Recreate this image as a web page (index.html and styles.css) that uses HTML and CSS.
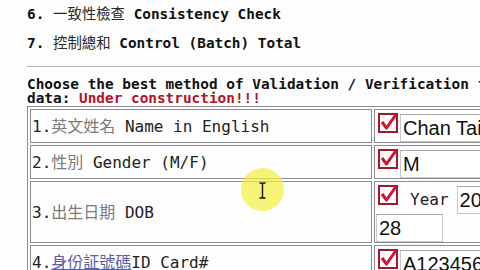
FILE: index.html
```html
<!DOCTYPE html>
<html lang="zh-Hant">
<head>
    <meta charset="UTF-8">
    <title>Validation / Verification</title>
    <link rel="stylesheet" href="styles.css">
</head>
<body>
    <div class="page">
        <p class="step">6. <span class="zh">一致性檢查</span> Consistency Check</p>
        <p class="step">7. <span class="zh">控制總和</span> Control (Batch) Total</p>

        <hr class="rule">

        <p class="intro">Choose the best method of Validation / Verification for the following<br>data: <span class="warn">Under construction!!!</span></p>

        <table class="form">
            <colgroup>
                <col class="col-label">
                <col class="col-field">
            </colgroup>

            <!-- Row 1 -->
            <tr>
                <td class="label">1.<span class="zh">英文姓名</span> Name in English</td>
                <td class="field">
                    <div class="line">
                        <svg class="tick" viewBox="0 0 20 20"><rect x="1" y="1" width="18" height="18"/><path d="M4 9 L8.5 15 L18 1.5"/></svg>
                        <input class="box wide" type="text" value="Chan Tai Man" readonly>
                    </div>
                </td>
            </tr>

            <!-- Row 2 -->
            <tr>
                <td class="label">2.<span class="zh">性別</span> Gender (M/F)</td>
                <td class="field">
                    <div class="line">
                        <svg class="tick" viewBox="0 0 20 20"><rect x="1" y="1" width="18" height="18"/><path d="M4 9 L8.5 15 L18 1.5"/></svg>
                        <input class="box wide" type="text" value="M" readonly>
                    </div>
                </td>
            </tr>

            <!-- Row 3 -->
            <tr>
                <td class="label">3.<span class="zh">出生日期</span> DOB</td>
                <td class="field">
                    <div class="line">
                        <svg class="tick" viewBox="0 0 20 20"><rect x="1" y="1" width="18" height="18"/><path d="M4 9 L8.5 15 L18 1.5"/></svg>
                        <span class="unit">Year</span>
                        <input class="box year" type="text" value="2012" readonly>
                    </div>
                    <div class="line next">
                        <input class="box day" type="text" value="28" readonly>
                    </div>
                </td>
            </tr>

            <!-- Row 4 -->
            <tr>
                <td class="label">4.<a class="zh link" href="#">身份証號碼</a>ID Card#</td>
                <td class="field">
                    <div class="line">
                        <svg class="tick" viewBox="0 0 20 20"><rect x="1" y="1" width="18" height="18"/><path d="M4 9 L8.5 15 L18 1.5"/></svg>
                        <input class="box wide" type="text" value="A1234567" readonly>
                    </div>
                </td>
            </tr>
        </table>
    </div>

    <!-- mouse pointer with its highlight -->
    <div class="hilite"></div>
    <svg class="ibeam" viewBox="0 0 9 17"><path d="M1.5 1 H3.5 Q4.5 1 4.5 2.5 V14.5 Q4.5 16 3.5 16 H1.5 M7.5 1 H5.5 Q4.5 1 4.5 2.5 M4.5 14.5 Q4.5 16 5.5 16 H7.5"/></svg>
</body>
</html>
```

FILE: styles.css
```css
html,
body {
    overflow: hidden;
}

body {
    margin: 0;
    background: #fdfdfd;
    color: #111;
    font-family: "DejaVu Sans Mono", "Noto Sans CJK TC", monospace;
}

.page {
    padding-left: 27px;
    white-space: nowrap;
}

.zh {
    font-family: "Noto Sans CJK TC", sans-serif;
    line-height: 14px;
}

.step {
    margin: 0;
    font-size: 14.4px;
    font-weight: bold;
    line-height: 29px;
}

.step .zh {
    font-weight: normal;
    color: #2a2a2a;
}

.rule {
    margin: 8px 0 10px;
    border: 0;
    border-top: 1px solid #b4b4b4;
    width: 600px;
}

.intro {
    margin: 0;
    font-size: 14.4px;
    font-weight: bold;
    line-height: 14px;
}

.warn {
    color: #b3142a;
}

.form {
    table-layout: fixed;
    width: 660px;
    margin-top: 1px;
    border: 1px solid #8c8c8c;
    border-spacing: 2px;
}

.col-label {
    width: 342px;
}

.col-field {
    width: 310px;
}

.form td {
    border: 1px solid #8c8c8c;
    padding: 0 1px;
    overflow: hidden;
}

.label {
    font-size: 16px;
    color: #222;
    vertical-align: middle;
}

.label .zh {
    color: #7a7a7a;
}

.label .link {
    color: #5a5ea8;
    text-decoration: underline;
}

.field {
    vertical-align: top;
}

.line {
    display: flex;
    align-items: flex-start;
    height: 32px;
}

.line.next {
    height: 28px;
}

.tick {
    width: 20px;
    height: 20px;
    margin: 3px 2px 0 2px;
    flex-shrink: 0;
}

.tick rect {
    fill: #fff;
    stroke: #a8162c;
    stroke-width: 2;
}

.tick path {
    fill: none;
    stroke: #d0102c;
    stroke-width: 3;
    stroke-linejoin: round;
}

.unit {
    margin: 8px 8px 0 10px;
    font-size: 16px;
    line-height: 20px;
    color: #222;
}

.box {
    box-sizing: border-box;
    height: 28px;
    margin: 4px 0 0;
    padding: 0 2px;
    border: 1px solid #c8c8c8;
    border-top-color: #a8a8a8;
    background: #fff;
    color: #111;
    font-family: "Liberation Sans", Arial, sans-serif;
    font-size: 20px;
    outline: none;
}

.wide {
    width: 240px;
}

.year {
    width: 70px;
}

.day {
    width: 67px;
    margin-top: 0;
}

.hilite {
    position: absolute;
    left: 241px;
    top: 168px;
    width: 43px;
    height: 43px;
    border-radius: 50%;
    background: rgba(242, 238, 60, 0.7);
}

.ibeam {
    position: absolute;
    left: 258px;
    top: 182px;
    width: 9px;
    height: 17px;
}

.ibeam path {
    fill: none;
    stroke: #111;
    stroke-width: 1.4;
}
```
